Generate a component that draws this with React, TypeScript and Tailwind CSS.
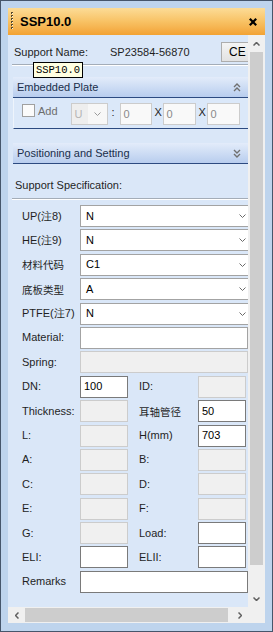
import React from "react";

const Chev = ({ dir = "down", color = "#6a6a6a", w = 7, h = 4, sw = 1 }: { dir?: "down" | "up" | "left" | "right"; color?: string; w?: number; h?: number; sw?: number }) => {
  let pts = "";
  if (dir === "down") pts = `0.5,0.5 ${w / 2},${h - 0.5} ${w - 0.5},0.5`;
  if (dir === "up") pts = `0.5,${h - 0.5} ${w / 2},0.5 ${w - 0.5},${h - 0.5}`;
  if (dir === "left") pts = `${w - 0.5},0.5 0.5,${h / 2} ${w - 0.5},${h - 0.5}`;
  if (dir === "right") pts = `0.5,0.5 ${w - 0.5},${h / 2} 0.5,${h - 0.5}`;
  return (
    <svg width={w} height={h} viewBox={`0 0 ${w} ${h}`} className="block">
      <polyline points={pts} fill="none" stroke={color} strokeWidth={sw} />
    </svg>
  );
};

const DoubleChev = ({ up }: { up: boolean }) => (
  <svg width="8" height="9" viewBox="0 0 8 9" className="block">
    {up ? (
      <>
        <polyline points="1,4 4,1 7,4" fill="none" stroke="#707070" strokeWidth="1.4" />
        <polyline points="1,8 4,5 7,8" fill="none" stroke="#707070" strokeWidth="1.4" />
      </>
    ) : (
      <>
        <polyline points="1,1 4,4 7,1" fill="none" stroke="#707070" strokeWidth="1.4" />
        <polyline points="1,5 4,8 7,5" fill="none" stroke="#707070" strokeWidth="1.4" />
      </>
    )}
  </svg>
);

const Sel = ({ label, value, cjk }: { label: string; value: string; cjk?: boolean }) => (
  <div className="flex items-center h-[22px] shrink-0">
    <div className={`w-[58px] shrink-0 text-[#1f1f1f] ${cjk ? "font-['Noto_Sans_CJK_SC',sans-serif] text-[10.5px]" : ""}`}>{label}</div>
    <div className="w-[172px] h-[22px] shrink-0 bg-white border border-[#a3a3a3] flex items-center pl-[5px] pr-[5px]">
      <span className="flex-1 text-black">{value}</span>
      <Chev dir="down" />
    </div>
  </div>
);

const Field = ({ enabled, value, w }: { enabled: boolean; value?: string; w: string }) => (
  <div
    className={`${w} h-[22px] shrink-0 flex items-center pl-[3px] text-black ${
      enabled ? "bg-white border border-[#7a7a7a]" : "bg-[#f0f0f0] border border-[#cccccc]"
    }`}
  >
    {value}
  </div>
);

const Pair = ({
  l1, e1, v1, l2, e2, v2, cjk2,
}: { l1: string; e1: boolean; v1?: string; l2: string; e2: boolean; v2?: string; cjk2?: boolean }) => (
  <div className="flex items-center h-[22px] shrink-0">
    <div className="w-[58px] shrink-0 text-[#1f1f1f]">{l1}</div>
    <Field enabled={e1} value={v1} w="w-[48px]" />
    <div className={`w-[70px] shrink-0 pl-[11px] text-[#1f1f1f] ${cjk2 ? "font-['Noto_Sans_CJK_SC',sans-serif] text-[10.5px]" : ""}`}>{l2}</div>
    <Field enabled={e2} value={v2} w="w-[48px]" />
  </div>
);

export default function App() {
  return (
    <div className="relative w-[273px] h-[632px] bg-[#bed4ed] border border-[#46566b] pt-[7px] pb-[8px] px-[7px] flex flex-col font-['Liberation_Sans',Arial,sans-serif] text-[11px] leading-[13px] overflow-hidden">
      {/* Title bar */}
      <div className="h-[27px] shrink-0 flex items-center bg-gradient-to-b from-[#fcdc96] via-[#f8c264] to-[#f2a232]">
        <div className="ml-[3px] w-[3px]">
          <svg width="3" height="19" viewBox="0 0 3 19" className="block">
            {[0, 3, 6, 9, 12, 15].map((y) => (
              <g key={y}>
                <rect x="0" y={y} width="2" height="2" fill="#5a4a2a" />
                <rect x="1" y={y + 1} width="1" height="1" fill="#fff6d8" />
              </g>
            ))}
          </svg>
        </div>
        <div className="ml-[6px] font-bold text-[13px] text-black flex-1">SSP10.0</div>
        <div className="mr-[8px]">
          <svg width="8" height="8" viewBox="0 0 8 8" className="block">
            <line x1="0.8" y1="0.8" x2="7.2" y2="7.2" stroke="#000" strokeWidth="2.2" />
            <line x1="7.2" y1="0.8" x2="0.8" y2="7.2" stroke="#000" strokeWidth="2.2" />
          </svg>
        </div>
      </div>

      {/* Body */}
      <div className="flex flex-1 min-h-0">
        <div className="w-[240px] shrink-0 bg-[#dae7f8] overflow-hidden flex flex-col">
          {/* Support name row */}
          <div className="flex items-center h-[20px] mt-[7px] shrink-0 whitespace-nowrap">
            <div className="pl-[6px] w-[102px] shrink-0 text-[#1f1f1f]">Support Name:</div>
            <div className="w-[111px] shrink-0 text-[#1f1f1f]">SP23584-56870</div>
            <div className="w-[32px] h-[20px] shrink-0 bg-gradient-to-b from-[#f4f4f4] to-[#e2e2e2] border border-[#adadad] flex items-center pl-[7px] text-[12px] text-black">
              CE
            </div>
          </div>
          <div className="ml-[4px] mt-[2px] h-[2px] shrink-0 border-t border-[#a4adb8] border-b border-b-white" />

          {/* Embedded Plate */}
          <div className="ml-[5px] w-[245px] mt-[11px] shrink-0">
            <div className="h-[21px] bg-gradient-to-b from-[#e3ecfa] to-[#b8cdee] border-b border-[#2c4a80] flex items-center pl-[4px] text-[#1a2e4a]">
              <span className="flex-1">Embedded Plate</span>
              <span className="mr-[17px]">
                <DoubleChev up />
              </span>
            </div>
            <div className="h-[31px] border-b border-[#2c4a80] border-l border-l-[#eef4fc] bg-[#dbe8f9] flex items-start pt-[5px] whitespace-nowrap">
              <div className="ml-[8px] mt-[1px] w-[13px] h-[13px] border border-[#a0a0a0] bg-[#fbfbfb]" />
              <div className="ml-[3px] mt-[2px] text-[#6d6d6d]">Add</div>
              <div className="ml-[13px] w-[37px] h-[22px] border border-[#cccccc] bg-[#f7f7f7] flex items-stretch">
                <div className="w-[16px] bg-[#eeeeee] pl-[3px] pt-[4px] text-[#b5b5b5]">U</div>
                <div className="flex-1 flex items-center justify-center">
                  <Chev dir="down" color="#9a9a9a" />
                </div>
              </div>
              <div className="ml-[4px] mt-[3px] w-[4px] text-[#1f1f1f]">:</div>
              <div className="ml-[4px] w-[32px] h-[22px] border border-[#cccccc] bg-[#f9f9f9] pl-[3px] pt-[4px] text-[#8a8a8a]">0</div>
              <div className="ml-[3px] mt-[3px] w-[8px] text-[#1f1f1f]">X</div>
              <div className="w-[33px] h-[22px] border border-[#cccccc] bg-[#f9f9f9] pl-[3px] pt-[4px] text-[#8a8a8a]">0</div>
              <div className="ml-[3px] mt-[3px] w-[8px] text-[#1f1f1f]">X</div>
              <div className="w-[33px] h-[22px] border border-[#cccccc] bg-[#f9f9f9] pl-[3px] pt-[4px] text-[#8a8a8a]">0</div>
            </div>
          </div>

          {/* Positioning */}
          <div className="ml-[5px] w-[245px] mt-[14px] shrink-0">
            <div className="h-[21px] bg-gradient-to-b from-[#e3ecfa] to-[#b8cdee] border-b border-[#2c4a80] flex items-center pl-[4px] text-[#1a2e4a]">
              <span className="flex-1">Positioning and Setting</span>
              <span className="mr-[17px]">
                <DoubleChev up={false} />
              </span>
            </div>
          </div>

          <div className="h-[34px] shrink-0 pl-[7px] pt-[15px] text-[#1f1f1f]">Support Specification:</div>
          <div className="ml-[4px] h-[2px] shrink-0 border-t border-[#a4adb8] border-b border-b-white" />

          {/* Rows */}
          <div className="mt-[5px] pl-[14px] flex flex-col gap-[2.4px] whitespace-nowrap">
            <Sel label="UP(注8)" value="N" />
            <Sel label="HE(注9)" value="N" />
            <Sel label="材料代码" value="C1" cjk />
            <Sel label="底板类型" value="A" cjk />
            <Sel label="PTFE(注7)" value="N" />
            <div className="flex items-center h-[22px] shrink-0">
              <div className="w-[58px] shrink-0 text-[#1f1f1f]">Material:</div>
              <div className="w-[168px] h-[22px] shrink-0 bg-white border border-[#a3a3a3]" />
            </div>
            <div className="flex items-center h-[22px] shrink-0">
              <div className="w-[58px] shrink-0 text-[#1f1f1f]">Spring:</div>
              <div className="w-[168px] h-[22px] shrink-0 bg-[#f0f0f0] border border-[#cccccc]" />
            </div>
            <Pair l1="DN:" e1 v1="100" l2="ID:" e2={false} />
            <Pair l1="Thickness:" e1={false} l2="耳轴管径" e2 v2="50" cjk2 />
            <Pair l1="L:" e1={false} l2="H(mm)" e2 v2="703" />
            <Pair l1="A:" e1={false} l2="B:" e2={false} />
            <Pair l1="C:" e1={false} l2="D:" e2={false} />
            <Pair l1="E:" e1={false} l2="F:" e2={false} />
            <Pair l1="G:" e1={false} l2="Load:" e2 />
            <Pair l1="ELI:" e1 l2="ELII:" e2 />
            <div className="flex items-center h-[22px] shrink-0">
              <div className="w-[58px] shrink-0 text-[#1f1f1f]">Remarks</div>
              <div className="w-[168px] h-[22px] shrink-0 bg-white border border-[#7a7a7a]" />
            </div>
          </div>
        </div>

        {/* Vertical scrollbar */}
        <div className="w-[17px] shrink-0 bg-[#f0f0f0] flex flex-col">
          <div className="h-[17px] shrink-0 flex items-center justify-center">
            <Chev dir="up" color="#606060" w={7} h={4} sw={1.5} />
          </div>
          <div className="h-[513px] mx-[2px] shrink-0 bg-[#cdcdcd]" />
          <div className="flex-1" />
          <div className="h-[17px] shrink-0 flex items-center justify-center">
            <Chev dir="down" color="#606060" w={7} h={4} sw={1.5} />
          </div>
        </div>
      </div>

      {/* Horizontal scrollbar */}
      <div className="h-[16px] shrink-0 flex bg-[#f0f0f0]">
        <div className="w-[17px] shrink-0 flex items-center justify-center">
          <Chev dir="left" color="#606060" w={4} h={7} sw={1.5} />
        </div>
        <div className="w-[203px] shrink-0 my-[1px] bg-[#cdcdcd]" />
        <div className="flex-1" />
        <div className="w-[17px] shrink-0 flex items-center justify-center">
          <Chev dir="right" color="#606060" w={4} h={7} sw={1.5} />
        </div>
        <div className="w-[17px] shrink-0" />
      </div>

      {/* Tooltip */}
      <div className="absolute left-[32px] top-[61px] w-[50px] h-[16px] bg-[#ffffe1] border border-[#000] flex items-center justify-center font-['Liberation_Mono',monospace] text-[10.5px] text-black">
        SSP10.0
      </div>
    </div>
  );
}
